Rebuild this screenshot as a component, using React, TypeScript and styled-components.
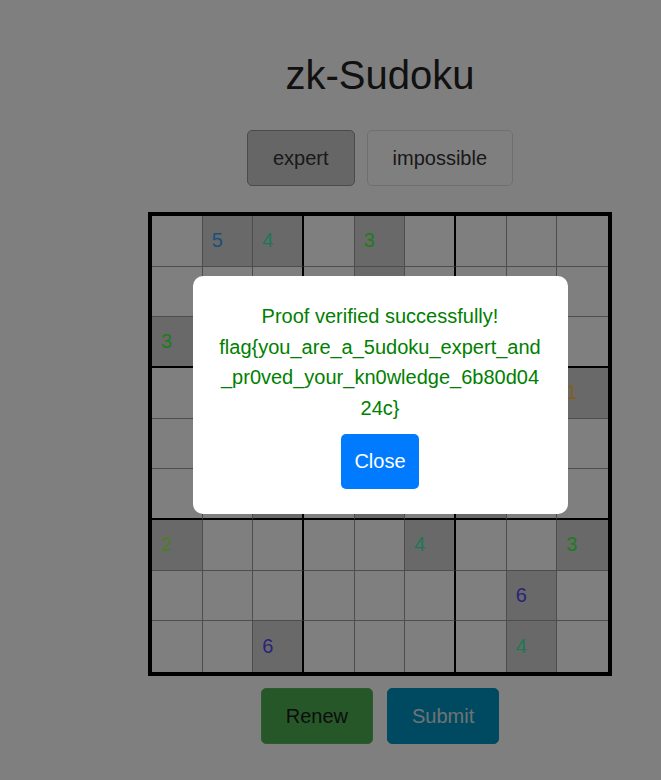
import React from "react";
import styled, { createGlobalStyle } from "styled-components";

const GlobalStyle = createGlobalStyle`
  html, body {
    margin: 0;
    padding: 0;
    overflow: hidden;
    background: #ffffff;
    font-family: "Liberation Sans", Arial, sans-serif;
  }
  * { box-sizing: border-box; }
`;

const Page = styled.main`
  width: 100%;
  display: flex;
  flex-direction: column;
  align-items: center;
  padding: 52px 0 0 99px;
`;

const Title = styled.h1`
  margin: 0;
  font-size: 40px;
  line-height: 46px;
  font-weight: normal;
  color: #222;
`;

const Row = styled.div<{ $gap: number; $top: number }>`
  display: flex;
  gap: ${(p) => p.$gap}px;
  margin-top: ${(p) => p.$top}px;
`;

const DiffButton = styled.button<{ $active?: boolean }>`
  font-family: inherit;
  font-size: 20px;
  line-height: 24px;
  padding: 15px 25px;
  border-radius: 5px;
  color: #333;
  background: ${(p) => (p.$active ? "#cccccc" : "#ffffff")};
  border: 1px solid ${(p) => (p.$active ? "#959595" : "#dedede")};
`;

const ActionButton = styled.button<{ $variant: "renew" | "submit" }>`
  font-family: inherit;
  font-size: 20px;
  line-height: 24px;
  padding: 15px 24px;
  border-radius: 5px;
  border: 1px solid ${(p) => (p.$variant === "renew" ? "#5cb460" : "#0094c4")};
  background: ${(p) => (p.$variant === "renew" ? "#4caf50" : "#0094c2")};
  color: ${(p) => (p.$variant === "renew" ? "#1a1a1a" : "#dde4e8")};
`;

const Board = styled.div`
  margin-top: 26px;
  width: 464px;
  height: 464px;
  border: 4px solid #000;
  display: grid;
  grid-template-columns: repeat(9, 1fr);
  grid-template-rows: repeat(9, 1fr);
`;

const Cell = styled.div<{ $given: boolean; $thickRight: boolean; $thickBottom: boolean; $lastCol: boolean; $lastRow: boolean; $color: string }>`
  display: flex;
  align-items: center;
  padding-left: 9px;
  font-size: 20px;
  color: ${(p) => p.$color};
  background: ${(p) => (p.$given ? "#d3d3d3" : "#ffffff")};
  border-right: ${(p) => (p.$lastCol ? "none" : p.$thickRight ? "2px solid #000" : "1px solid #9a9a9a")};
  border-bottom: ${(p) => (p.$lastRow ? "none" : p.$thickBottom ? "2px solid #000" : "1px solid #9a9a9a")};
`;

const Overlay = styled.div`
  position: fixed;
  inset: 0;
  background: rgba(0, 0, 0, 0.5);
  display: flex;
  align-items: center;
  justify-content: center;
  padding: 10px 0 0 99px;
`;

const Modal = styled.div`
  width: 375px;
  background: #ffffff;
  border-radius: 10px;
  padding: 25px;
  display: flex;
  flex-direction: column;
  align-items: center;
`;

const Message = styled.div`
  font-size: 20px;
  line-height: 30.67px;
  color: #008000;
  text-align: center;
  word-break: break-all;
  width: 100%;
`;

const CloseButton = styled.button`
  margin-top: 10.5px;
  font-family: inherit;
  font-size: 20px;
  line-height: 23px;
  padding: 16px 13px;
  border: none;
  border-radius: 5px;
  background: #007bff;
  color: #ffffff;
`;

const digitColors: Record<number, string> = {
  1: "#ffc040",
  2: "#96fc3e",
  3: "#3cf83c",
  4: "#3cf0a8",
  5: "#3a9ef0",
  6: "#5048f0",
  7: "#c050f0",
  8: "#f05080",
  9: "#f08040",
};

const puzzle: number[][] = [
  [0, 5, 4, 0, 3, 0, 0, 0, 0],
  [0, 0, 0, 0, 6, 0, 0, 0, 0],
  [3, 0, 0, 0, 0, 0, 0, 0, 0],
  [0, 0, 0, 0, 0, 0, 0, 0, 1],
  [0, 0, 0, 0, 0, 0, 0, 0, 0],
  [0, 0, 2, 0, 1, 0, 5, 0, 0],
  [2, 0, 0, 0, 0, 4, 0, 0, 3],
  [0, 0, 0, 0, 0, 0, 0, 6, 0],
  [0, 0, 6, 0, 0, 0, 0, 4, 0],
];

export default function App() {
  return (
    <>
      <GlobalStyle />
      <Page>
        <Title>zk-Sudoku</Title>
        <Row $gap={12} $top={32}>
          <DiffButton $active>expert</DiffButton>
          <DiffButton>impossible</DiffButton>
        </Row>
        <Board>
          {puzzle.map((row, r) =>
            row.map((v, c) => (
              <Cell
                key={`${r}-${c}`}
                $given={v !== 0}
                $thickRight={c === 2 || c === 5}
                $thickBottom={r === 2 || r === 5}
                $lastCol={c === 8}
                $lastRow={r === 8}
                $color={digitColors[v] || "#000"}
              >
                {v !== 0 ? v : ""}
              </Cell>
            ))
          )}
        </Board>
        <Row $gap={14} $top={12}>
          <ActionButton $variant="renew">Renew</ActionButton>
          <ActionButton $variant="submit">Submit</ActionButton>
        </Row>
      </Page>
      <Overlay>
        <Modal>
          <Message>Proof verified successfully!</Message>
          <Message>flag&#123;you_are_a_5udoku_expert_and_pr0ved_your_kn0wledge_6b80d0424c&#125;</Message>
          <CloseButton>Close</CloseButton>
        </Modal>
      </Overlay>
    </>
  );
}
